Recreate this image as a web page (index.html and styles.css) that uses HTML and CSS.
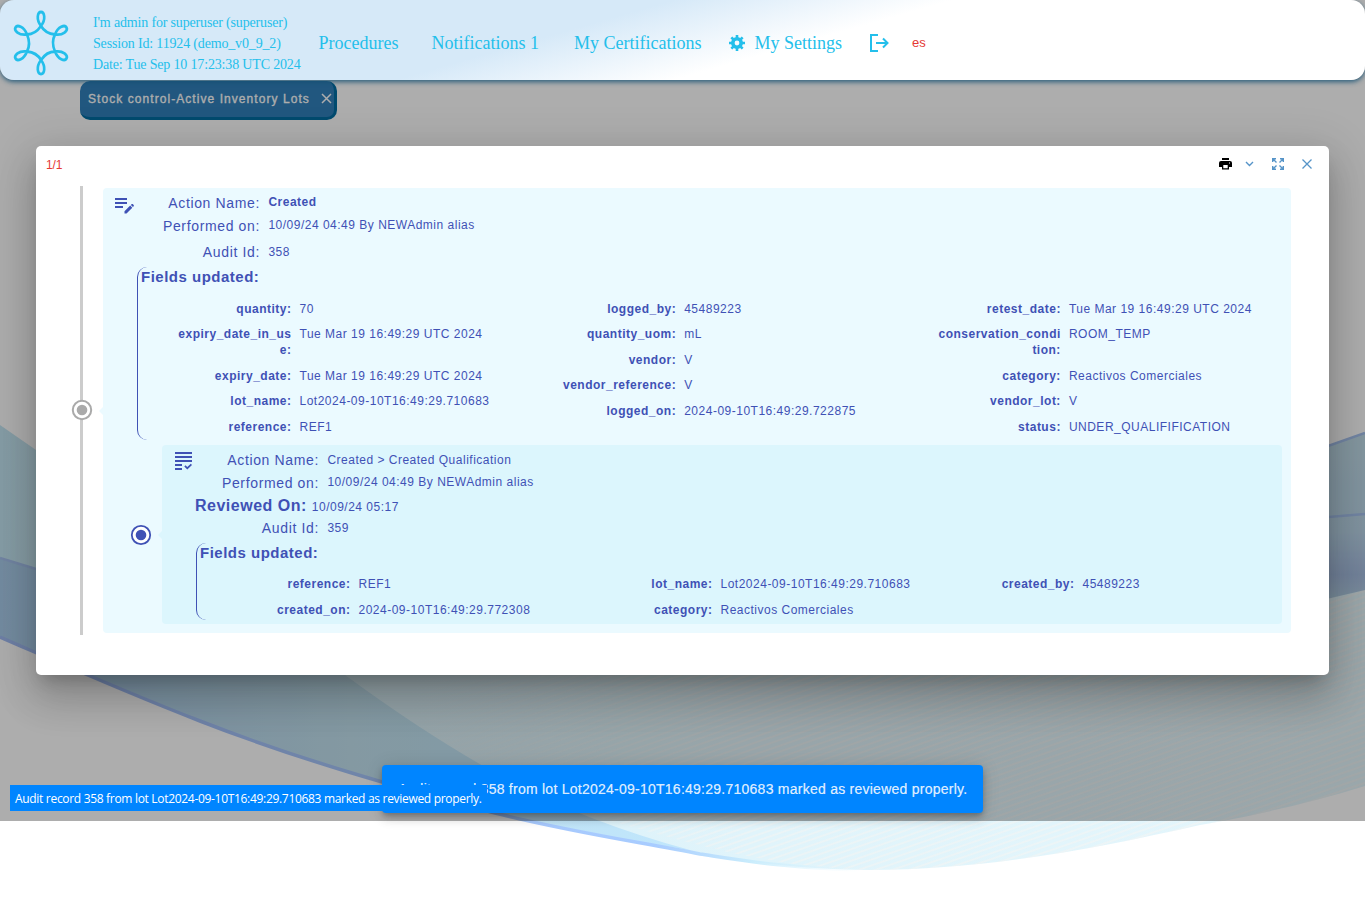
FILE: index.html
```html
<!DOCTYPE html>
<html lang="en">
<head>
<meta charset="utf-8">
<title>Stock control</title>
<link rel="stylesheet" href="styles.css">
</head>
<body>
<svg class="waves" viewBox="0 0 1365 901" preserveAspectRatio="none" aria-hidden="true">
  <defs>
    <linearGradient id="base" x1="0" x2="1" y1="0" y2="0">
      <stop offset="0" stop-color="#c5e6f3"/><stop offset=".3" stop-color="#dbf1f8"/><stop offset=".55" stop-color="#e0f4fb"/><stop offset="1" stop-color="#e4f6fc"/>
    </linearGradient>
    <linearGradient id="edge" gradientUnits="userSpaceOnUse" x1="0" x2="1365" y1="0" y2="0">
      <stop offset="0" stop-color="#a2bcf4"/><stop offset=".48" stop-color="#a8ccff"/><stop offset=".55" stop-color="#c9ecfc"/><stop offset=".63" stop-color="#e0f6fe" stop-opacity="0"/>
    </linearGradient>
    <linearGradient id="band" gradientUnits="userSpaceOnUse" x1="0" x2="700" y1="0" y2="0">
      <stop offset="0" stop-color="#aacdec"/><stop offset=".5" stop-color="#c3e2ef"/><stop offset="1" stop-color="#bfe6fd"/>
    </linearGradient>
    <linearGradient id="right" x1="0" x2="0" y1="0" y2="1">
      <stop offset="0" stop-color="#c3deeb"/><stop offset=".55" stop-color="#bcd8eb"/><stop offset=".8" stop-color="#a9c0e4"/><stop offset="1" stop-color="#b9d8e6"/>
    </linearGradient>
    <linearGradient id="fade" x1="0" x2="1" y1="0" y2="0">
      <stop offset="0" stop-color="#000"/><stop offset=".35" stop-color="#fff"/>
    </linearGradient>
    <mask id="soft"><rect x="400" y="560" width="965" height="341" fill="url(#fade)"/></mask>
    <pattern id="ripples" width="300" height="5.500" patternUnits="userSpaceOnUse" patternTransform="rotate(-19)">
      <path d="M0 2H300" stroke="#fff4f0" stroke-opacity=".4" stroke-width="1.800"/>
    </pattern>
  </defs>
  <path d="M0 425L36 450Q680 800 1329 446L1365 433V786C1300 806 1240 818 1200 825C1090 850 980 870 870 870C790 869 740 860 700 854C640 842 570 832 495 813C400 788 300 760 200 721C120 690 60 663 0 637Z" fill="url(#base)"/>
  <path d="M400 590H1365V786C1300 806 1240 818 1200 825C1090 850 980 870 870 870C740 867 650 830 400 760Z" fill="url(#ripples)" mask="url(#soft)"/>
  <path d="M0 558L36 569C150 600 270 630 345 675Q420 730 485 767Q570 817 690 850C640 842 570 832 495 813C400 788 300 760 200 721C120 690 60 663 0 637Z" fill="url(#band)"/>
  <path d="M1280 463L1365 433V590L1280 610Z" fill="url(#right)"/>
  <path d="M1280 521L1365 514M1280 463L1365 433M0 558L36 569" stroke="#a7c3ef" stroke-width="2.500" fill="none"/>
  <path d="M0 637C60 663 120 690 200 721C300 760 400 788 495 813C570 832 640 842 700 854C740 860 790 869 870 870" stroke="url(#edge)" stroke-width="3.500" fill="none"/>
</svg>

<button class="tab"><span>Stock control-Active Inventory Lots</span>
  <svg width="11" height="11" viewBox="0 0 11 11"><path d="M1 1l9 9M10 1l-9 9" stroke="currentColor" stroke-width="1.500"/></svg>
</button>
<div class="scrim"></div>

<header class="topbar">
  <svg class="logo" width="62" height="68" viewBox="-31 -34 62 68" fill="none" stroke="#24bfeb" stroke-width="2.800">
    <defs><path id="petal" d="M0-17C-5.500-24-3.500-31 0-31S5.500-24 0-17Q4.500-9.500 14.700-8.500"/></defs>
    <g transform="scale(.95 1)"><use href="#petal"/><use href="#petal" transform="rotate(60)"/><use href="#petal" transform="rotate(120)"/><use href="#petal" transform="rotate(180)"/><use href="#petal" transform="rotate(240)"/><use href="#petal" transform="rotate(300)"/></g>
  </svg>
  <div class="session">
    <div>I'm admin for superuser (superuser)</div>
    <div>Session Id: 11924 (demo_v0_9_2)</div>
    <div>Date: Tue Sep 10 17:23:38 UTC 2024</div>
  </div>
  <nav class="menu">
    <a class="procedures">Procedures</a>
    <a class="notifications">Notifications 1</a>
    <a class="certifications">My Certifications</a>
    <a class="settings">
      <svg width="16" height="16" viewBox="-8 -8 16 16"><g fill="#24bfeb"><path fill-rule="evenodd" d="M0-6A6 6 0 1 0 0 6A6 6 0 1 0 0-6ZM0-2.400A2.400 2.400 0 1 1 0 2.400A2.400 2.400 0 1 1 0-2.400Z"/><g id="teeth"><path d="M-1.300-8h2.600v3h-2.600zM-1.300 5h2.600v3h-2.600zM-8-1.300h3v2.600h-3zM5-1.300h3v2.600h-3z"/></g><use href="#teeth" transform="rotate(45)"/></g></svg>
      <span>My Settings</span></a>
    <a class="exit"><svg width="19" height="18" viewBox="0 0 19 18" fill="none" stroke="#24bfeb" stroke-width="2"><path d="M8 1H1V17H8M6 9H17M13 4.500L17.500 9L13 13.500"/></svg></a>
    <a class="lang">es</a>
  </nav>
</header>

<main class="dialog">
  <div class="dialog-head">
    <span class="count">1/1</span>
    <svg class="print" width="13" height="12" viewBox="0 0 13 12"><path d="M3 0H10V2H3ZM2 3H11Q13 3 13 5V9H10V11.500H3V9H0V5Q0 3 2 3ZM4.300 7V10.200H8.700V7ZM10 4.500V5.500H11V4.500Z" fill="#000" fill-rule="evenodd"/></svg>
    <svg class="chevron" width="9" height="6" viewBox="0 0 9 6"><path d="M1 1L4.500 4.500L8 1" fill="none" stroke="#5694c8" stroke-width="1.400"/></svg>
    <svg class="expand" width="12" height="12" viewBox="0 0 12 12" fill="none" stroke="#5694c8" stroke-width="1.400"><path d="M.7 4V.7H4M8 .7H11.300V4M11.300 8V11.300H8M4 11.300H.7V8M1 1L4.500 4.500M11 1L7.500 4.500M11 11L7.500 7.500M1 11L4.500 7.500"/></svg>
    <svg class="close" width="10" height="10" viewBox="0 0 10 10"><path d="M.5.5L9.500 9.500M9.500.5L.5 9.500" stroke="#5694c8" stroke-width="1.300"/></svg>
  </div>
  <div class="timeline">
    <div class="rail"><svg class="marker" width="22" height="22" viewBox="-11 -11 22 22"><circle r="9.200" fill="#fff" stroke="#aaa" stroke-width="2"/><circle r="5.300" fill="#aaa"/></svg></div>
    <section class="card">
      <div class="facts">
        <svg class="kind" width="20" height="16" viewBox="0 0 20 16" fill="#3f51b5"><path d="M0 0H12V2H0ZM0 4H12V6H0ZM0 8H8V10H0ZM9.500 15.500V13.300L15.200 7.600L17.300 9.700L11.500 15.500ZM15.900 6.900L16.700 6.100Q17.200 5.700 17.700 6.100L18.700 7.100Q19.100 7.600 18.700 8.200L17.900 9Z"/></svg>
        <div class="fact first"><span class="name">Action Name:</span><b class="value">Created</b></div>
        <div class="fact second"><span class="name">Performed on:</span><span class="value">10/09/24 04:49 By NEWAdmin alias</span></div>
        <div class="fact third"><span class="name">Audit Id:</span><span class="value">358</span></div>
      </div>
      <div class="fields">
        <h3>Fields updated:</h3>
        <div class="columns">
          <dl>
            <dt>quantity:</dt><dd>70</dd>
            <dt>expiry_date_in_us<br>e:</dt><dd>Tue Mar 19 16:49:29 UTC 2024</dd>
            <dt>expiry_date:</dt><dd>Tue Mar 19 16:49:29 UTC 2024</dd>
            <dt>lot_name:</dt><dd>Lot2024-09-10T16:49:29.710683</dd>
            <dt>reference:</dt><dd>REF1</dd>
          </dl>
          <dl>
            <dt>logged_by:</dt><dd>45489223</dd>
            <dt>quantity_uom:</dt><dd>mL</dd>
            <dt>vendor:</dt><dd>V</dd>
            <dt>vendor_reference:</dt><dd>V</dd>
            <dt>logged_on:</dt><dd>2024-09-10T16:49:29.722875</dd>
          </dl>
          <dl>
            <dt>retest_date:</dt><dd>Tue Mar 19 16:49:29 UTC 2024</dd>
            <dt>conservation_condi<br>tion:</dt><dd>ROOM_TEMP</dd>
            <dt>category:</dt><dd>Reactivos Comerciales</dd>
            <dt>vendor_lot:</dt><dd>V</dd>
            <dt>status:</dt><dd>UNDER_QUALIFIFICATION</dd>
          </dl>
        </div>
      </div>
      <section class="card nested">
        <svg class="marker" width="22" height="22" viewBox="-11 -11 22 22"><circle r="9.200" fill="#fff" stroke="#3f51b5" stroke-width="1.800"/><circle r="5.300" fill="#3f51b5"/></svg>
        <div class="facts">
          <svg class="kind" width="17" height="18" viewBox="0 0 17 18" fill="#3f51b5"><path d="M0 0H17V2H0ZM0 4H17V6H0ZM0 8H17V10H0ZM0 12H7V14H0ZM0 16H7V18H0ZM9.300 14.500L10.500 13.300L12.300 15L15.800 11.700L17 12.900L12.300 17.400Z"/></svg>
          <div class="fact n1"><span class="name">Action Name:</span><span class="value">Created &gt; Created Qualification</span></div>
          <div class="fact n2"><span class="name">Performed on:</span><span class="value">10/09/24 04:49 By NEWAdmin alias</span></div>
          <div class="fact reviewed"><b>Reviewed On:</b><span class="value">10/09/24 05:17</span></div>
          <div class="fact n4"><span class="name">Audit Id:</span><span class="value">359</span></div>
        </div>
        <div class="fields">
          <h3>Fields updated:</h3>
          <div class="columns">
            <dl><dt>reference:</dt><dd>REF1</dd><dt>created_on:</dt><dd>2024-09-10T16:49:29.772308</dd></dl>
            <dl><dt>lot_name:</dt><dd>Lot2024-09-10T16:49:29.710683</dd><dt>category:</dt><dd>Reactivos Comerciales</dd></dl>
            <dl><dt>created_by:</dt><dd>45489223</dd></dl>
          </div>
        </div>
      </section>
    </section>
  </div>
</main>

<div class="snackbar">Audit record 358 from lot Lot2024-09-10T16:49:29.710683 marked as reviewed properly.</div>
<div class="notice">Audit record 358 from lot Lot2024-09-10T16:49:29.710683 marked as reviewed properly.</div>
</body>
</html>
```
FILE: styles.css
```css
* { box-sizing: border-box; }
body { margin: 0; width: 1365px; height: 901px; position: relative; overflow: hidden; background: #fff; font-family: "Liberation Sans", Arial, sans-serif; }
svg { display: block; flex: none; }
.waves { position: absolute; inset: 0; width: 1365px; height: 901px; }
.scrim { position: absolute; inset: 0 0 80px; background: rgba(0, 0, 0, .32); }

.topbar { position: absolute; inset: 0 0 auto; height: 80px; display: flex; align-items: center; padding: 5px 0 0 10px; border-radius: 14px; background: linear-gradient(164deg, #d6e9f8 41%, #fff 58%); box-shadow: 0 2px 5px rgba(20, 80, 115, .85); font-family: "Liberation Serif", "Times New Roman", serif; color: #24bfeb; white-space: nowrap; }
.session { margin-left: 21px; padding-top: 2px; width: 225.5px; font-size: 14px; line-height: 21px; letter-spacing: -.165px; }
.menu { display: flex; align-items: center; font-size: 18px; line-height: 24px; }
.notifications { margin-left: 33px; }
.certifications { margin-left: 35px; }
.settings { display: flex; align-items: center; gap: 9px; margin-left: 28px; }
.exit { margin-left: 28px; }
.lang { margin-left: 23px; padding-top: 1px; font: 13px/20px "Liberation Sans", Arial, sans-serif; color: #e53935; }

.tab { position: absolute; top: 81px; left: 80px; width: 257px; height: 39px; display: flex; align-items: center; justify-content: space-between; padding: 0 2px 1px 8px; border: 0 solid #006da3; border-width: 0 3px 3px 0; border-radius: 10px; background: #3181bb; color: #fff; font: 500 12px "Liberation Sans", Arial, sans-serif; letter-spacing: 1.060px; white-space: nowrap; -webkit-text-stroke: .3px; }

.dialog { position: absolute; top: 146px; left: 36px; width: 1293px; height: 529px; border-radius: 5px; background: #fff; box-shadow: 0 11px 15px -7px rgba(0, 0, 0, .2), 0 24px 38px 3px rgba(0, 0, 0, .14), 0 9px 46px 8px rgba(0, 0, 0, .12); color: #3f51b5; font-size: 12px; letter-spacing: .5px; }
.dialog-head { display: flex; align-items: center; height: 40px; padding: 0 17px 4px 10px; }
.count { margin-right: auto; padding-top: 2px; color: #e53935; letter-spacing: -.15px; }
.chevron { margin-left: 13px; }
.expand { margin-left: 18px; }
.close { margin-left: 18px; }
.timeline { display: flex; height: 449px; padding-left: 44px; }
.rail { position: relative; width: 3px; background: #ccc; }
.rail .marker { position: absolute; left: -9.500px; top: 213px; }
.card { position: relative; width: 1188px; height: 445px; margin: 2px 0 0 20px; padding-top: 2px; border-radius: 4px; background: #ebfaff; }
.card::before { content: ""; position: absolute; left: -4px; top: 50%; margin-top: -4px; border: solid transparent; border-width: 4px 4px 4px 0; border-right-color: #ebfaff; }
.facts { position: relative; }
.kind { position: absolute; left: 12px; top: 8px; }
.fact { display: flex; align-items: center; gap: 8.400px; }
.name { width: 157px; text-align: right; font-size: 14px; letter-spacing: .640px; }
.value { position: relative; top: -1px; }
.first { height: 26px; }
.second { height: 20px; }
.third { height: 31px; }
.third .value, .n1 .value { top: 0; }
.fields { height: 173px; margin-left: 34px; border-left: 1px solid #3f51b5; border-radius: 10px; }
h3 { margin: 0; padding-left: 3px; font-size: 15px; line-height: 20px; letter-spacing: .5px; }
.columns { display: grid; grid-template-columns: 384.700px 384.700px 1fr; padding-top: 13.800px; }
dl { display: grid; grid-template-columns: 153.500px 1fr; align-content: start; gap: 9.500px 8px; margin: 0; line-height: 16px; }
dt { font-weight: 700; text-align: right; }
dd { margin: 0; white-space: nowrap; }

.nested { width: 1120px; height: 179px; margin: 5px 0 0 59px; padding-top: 4px; background: #dcf6fd; }
.nested::before { border-right-color: #dcf6fd; }
.nested > .marker { position: absolute; left: -32.500px; top: 79px; }
.nested .kind { left: 13px; top: 3px; }
.n1 { height: 22px; }
.n2 { height: 24px; }
.reviewed { height: 22px; padding-left: 33px; gap: 5px; font-size: 16px; }
.reviewed .value { font-size: 12px; top: 1px; }
.n4 { height: 22px; }
.n4 .value { top: 0; }
.nested .fields { height: 77px; margin-top: 4px; }
.nested .columns { grid-template-columns: 362px 362px 1fr; padding-top: 13px; }

.snackbar { position: absolute; left: 382px; top: 765px; width: 601px; height: 48px; padding: 0 16px; border-radius: 4px; background: #0085ff; color: rgba(255, 255, 255, .87); box-shadow: 0 3px 5px -1px rgba(0, 0, 0, .2), 0 6px 10px rgba(0, 0, 0, .14), 0 1px 18px rgba(0, 0, 0, .12); font-size: 14px; line-height: 48px; letter-spacing: .250px; white-space: nowrap; -webkit-text-stroke: .2px; }
.notice { position: absolute; left: 10px; top: 785px; width: 477px; height: 26px; padding: 1px 0 0 5px; background: #0085ff; color: #fff; font: 12px/26px "Open Sans", "Segoe UI", sans-serif; letter-spacing: -.310px; white-space: nowrap; }
```
